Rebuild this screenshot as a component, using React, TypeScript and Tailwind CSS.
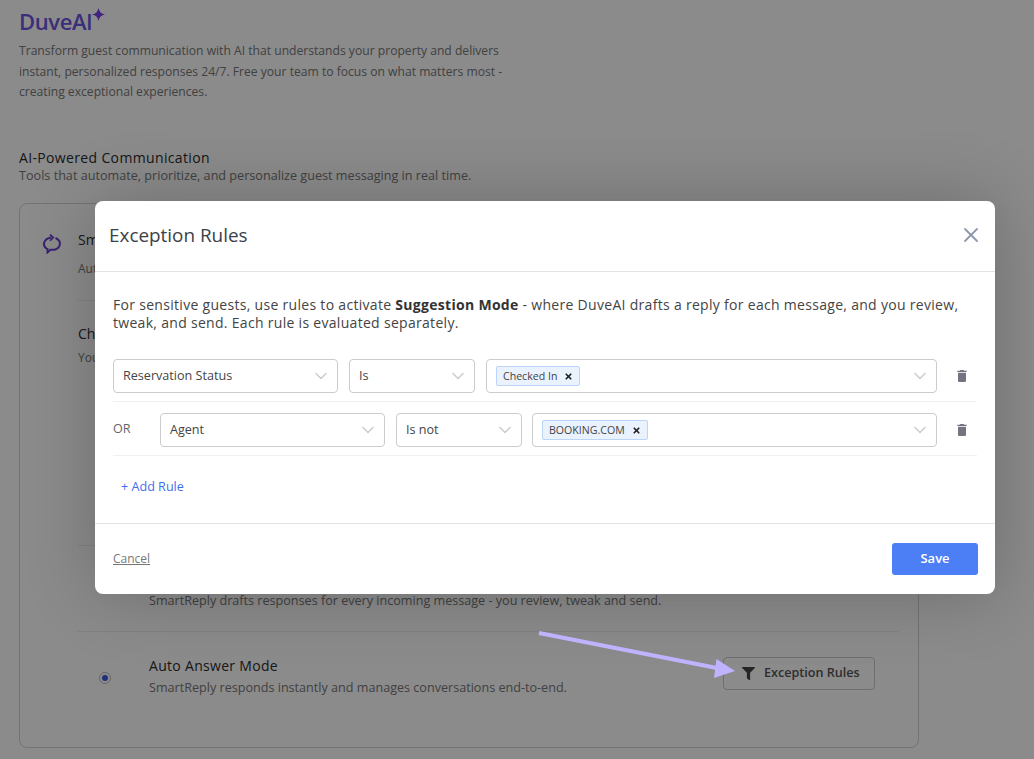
import React from 'react';
import {ChevronDown, X} from "lucide-react";
import {MdDelete} from "react-icons/md";
import {FaFilter} from "react-icons/fa";

const Select = ({label, className}: {label: string, className: string}) => (
    <div className={`flex items-center justify-between h-[34px] pl-[9px] pr-[6px] border border-[#cccccc] rounded-[4px] text-[12.6px] text-[#444444] ${className}`}>
        <span>{label}</span>
        <ChevronDown size={20} strokeWidth={1.8} className="text-[#cccccc]"/>
    </div>
);

const TagSelect = ({label, className}: {label: string, className: string}) => (
    <div className={`flex items-center justify-between h-[34px] pl-[9px] pr-[6px] border border-[#cccccc] rounded-[4px] ${className}`}>
        <span className="flex items-center h-[20px] pl-[6px] pr-[6px] pt-[1px] gap-[7px] bg-[#eaf2fe] border border-[#bcd4f8] rounded-[2px] text-[10.6px] text-[#444444]">
            {label}
            <X size={9} strokeWidth={4.5} className="text-[#222222]"/>
        </span>
        <ChevronDown size={20} strokeWidth={1.8} className="text-[#cccccc]"/>
    </div>
);

const Trash = () => (
    <div className="flex flex-1 justify-center pr-[2px]">
        <MdDelete size={16} className="text-[#76727f]"/>
    </div>
);

const ExceptionRulesModal = () => (
    <div className="absolute inset-0 bg-[#000000]/[0.455] flex items-start pl-[95px] pt-[201px]">
        <div className="flex flex-col w-[900px] h-[393px] bg-white rounded-[8px] shadow-[0_0_70px_rgba(0,0,0,0.22)]">
            <div className="flex items-center justify-between h-[71px] pl-[14px] pr-[12px] pb-[2px] border-b border-[#e3e3e3]">
                <h2 className="text-[18.9px] text-[#3c4149]">Exception Rules</h2>
                <X size={24} strokeWidth={1.8} className="text-[#8a97ad]"/>
            </div>
            <div className="flex flex-col flex-1 pl-[18px] pr-[18px] pt-[24px]">
                <p className="text-[14px] leading-[18px] tracking-[0.3px] text-[#444444] w-[860px]">
                    For sensitive guests, use rules to activate <b className="font-bold text-[#333333]">Suggestion Mode</b> - where DuveAI drafts a reply for each message, and you review, tweak, and send. Each rule is evaluated separately.
                </p>
                <div className="flex items-center gap-[11px] mt-[27px] pb-[8px] border-b border-[#f1f1f1]">
                    <Select label="Reservation Status" className="w-[225px]"/>
                    <Select label="Is" className="w-[126px]"/>
                    <TagSelect label="Checked In" className="w-[451px]"/>
                    <Trash/>
                </div>
                <div className="flex items-center mt-[11px] pb-[8px] border-b border-[#f1f1f1]">
                    <span className="w-[47px] pb-[2px] text-[12.6px] text-[#666666]">OR</span>
                    <Select label="Agent" className="w-[225px] mr-[11px]"/>
                    <Select label="Is not" className="w-[126px] mr-[10px]"/>
                    <TagSelect label="BOOKING.COM" className="w-[405px] mr-[11px]"/>
                    <Trash/>
                </div>
                <span className="mt-[22px] ml-[8px] text-[12.6px] text-[#3f6ff0]">+ Add Rule</span>
            </div>
            <div className="flex items-center justify-between h-[71px] pl-[18px] pr-[17px] border-t border-[#e3e3e3]">
                <span className="text-[12px] text-[#777777] underline">Cancel</span>
                <button className="w-[86px] h-[32px] bg-[#4c7ef5] rounded-[3px] text-[13px] font-semibold text-white">Save</button>
            </div>
        </div>
    </div>
);

const Arrow = () => (
    <svg className="absolute left-[530px] top-[625px]" width="215" height="60" viewBox="530 625 215 60">
        <line x1="539" y1="633" x2="722" y2="669" stroke="#bfb3ff" strokeWidth="4"/>
        <polygon points="735,671 716.5,659 714,678" fill="#bfb3ff"/>
    </svg>
);

const SmartIcon = () => (
    <svg width="20" height="20" viewBox="0 0 20 20" fill="none" stroke="#6d3fd0" strokeWidth="2">
        <path d="M5 15 A8.8 6.6 0 0 1 9 3.6"/>
        <path d="M8 0.6 L11.2 3.6 L8 6.6" strokeWidth="1.8"/>
        <path d="M13.5 4 A8.8 6.6 0 0 1 12.5 15.8 L8.5 15.8 L5.5 18.4 L5.5 14"/>
    </svg>
);

export default function App() {
    return (
        <div className="relative h-[759px] w-[1034px] overflow-hidden bg-white pl-[19px] pt-[6px] font-['Open_Sans',sans-serif]">
            <div className="flex items-start h-[30px]">
                <h1 className="text-[22px] leading-[30px] font-semibold tracking-[-0.4px] text-[#6b56e0]">DuveAI</h1>
                <svg width="13" height="13" viewBox="0 0 14 14" className="mt-[2px]">
                    <path d="M7 0 Q8 6 14 7 Q8 8 7 14 Q6 8 0 7 Q6 6 7 0 Z" fill="#7a3ff0"/>
                </svg>
            </div>
            <p className="mt-[5px] h-[62px] w-[510px] text-[12.13px] leading-[20.5px] text-[#777777]">
                Transform guest communication with AI that understands your property and delivers instant, personalized responses 24/7. Free your team to focus on what matters most - creating exceptional experiences.
            </p>
            <h3 className="mt-[45px] text-[14px] leading-[19px] tracking-[0.35px] text-[#2c2c2c]">AI-Powered Communication</h3>
            <p className="text-[12.64px] leading-[16px] text-[#777777]">Tools that automate, prioritize, and personalize guest messaging in real time.</p>

            <div className="mt-[20px] flex flex-col w-[900px] h-[545px] pl-[22px] pr-[19px] pt-[27px] border border-[#d4d4d4] rounded-[8px]">
                <div className="flex items-start gap-[15px] h-[69px]">
                    <div className="mt-[3px]"><SmartIcon/></div>
                    <div className="ml-[1px] -mt-[1px]">
                        <p className="text-[14px] leading-[19px] text-[#2c2c2c]">SmartReply</p>
                        <p className="mt-[12px] text-[12px] leading-[16px] text-[#777777]">Automatically</p>
                    </div>
                </div>
                <div className="ml-[36px] pt-[23px] h-[245px] border-t border-[#ececec]">
                    <p className="text-[14px] leading-[19px] text-[#2c2c2c]">Choose</p>
                    <p className="mt-[7px] text-[12px] leading-[16px] text-[#777777]">You</p>
                </div>
                <div className="flex items-end ml-[36px] pb-[22px] h-[86px] border-t border-[#ececec]">
                    <p className="ml-[71px] text-[12.6px] leading-[16px] text-[#777777]">SmartReply drafts responses for every incoming message - you review, tweak and send.</p>
                </div>
                <div className="flex items-center justify-between ml-[36px] pt-[24px] pl-[21px] pr-[24px] border-t border-[#ececec]">
                    <div className="flex items-center gap-[38px]">
                        <span className="flex items-center justify-center w-[12px] h-[12px] mt-[3px] rounded-full border border-[#bdbdbd]">
                            <span className="w-[6px] h-[6px] rounded-full bg-[#3a57e8]"/>
                        </span>
                        <div>
                            <p className="text-[14px] leading-[19px] tracking-[0.3px] text-[#2c2c2c]">Auto Answer Mode</p>
                            <p className="mt-[5px] text-[12.6px] leading-[16px] text-[#777777]">SmartReply responds instantly and manages conversations end-to-end.</p>
                        </div>
                    </div>
                    <button className="flex items-center gap-[9px] w-[152px] h-[33px] mb-[5px] pl-[18px] border border-[#cccccc] rounded-[4px] text-[12.6px] font-semibold text-[#555555]">
                        <FaFilter size={13} className="text-[#444444]"/>
                        Exception Rules
                    </button>
                </div>
            </div>

            <ExceptionRulesModal/>
            <Arrow/>
        </div>
    );
}
